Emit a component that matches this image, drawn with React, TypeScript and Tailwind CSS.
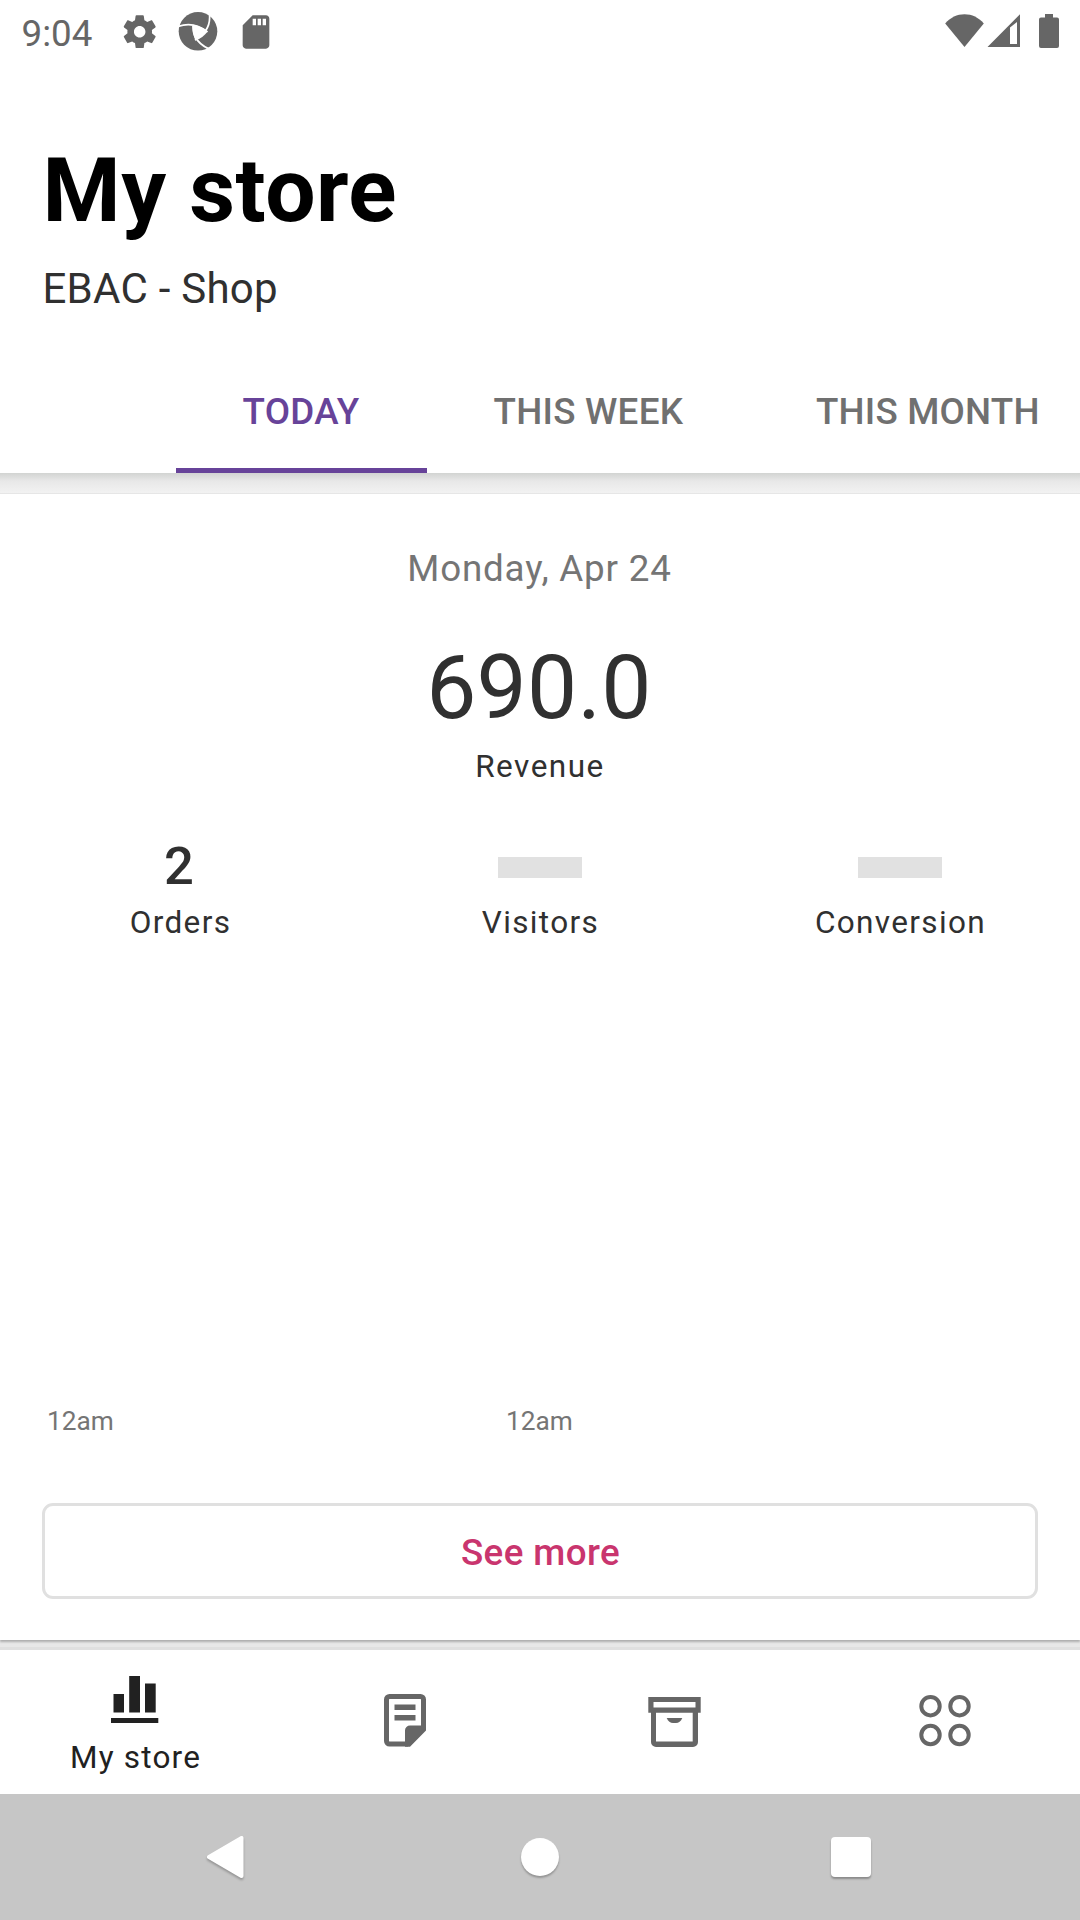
import React from "react";
import { MdSdCard } from "react-icons/md";

function StatusBar() {
  return (
    <div className="flex h-16 shrink-0 items-start text-[#666666]">
      <span className="ml-[21.5px] mt-[12px] w-[71px] text-[36.75px] leading-[43px]">9:04</span>
      <svg className="ml-[27.500px] mt-[12px] size-[39.4px] shrink-0" viewBox="0 0 24 24">
        <path
          fill="currentColor"
          d="M19.43 12.98c.04-.32.07-.64.07-.98s-.03-.66-.07-.98l2.11-1.65c.19-.15.24-.42.12-.64l-2-3.46c-.12-.22-.39-.3-.61-.22l-2.49 1c-.52-.4-1.08-.73-1.69-.98l-.38-2.65C14.46 2.18 14.25 2 14 2h-4c-.25 0-.46.18-.49.42l-.38 2.65c-.61.25-1.17.59-1.69.98l-2.49-1c-.23-.09-.49 0-.61.22l-2 3.46c-.13.22-.07.49.12.64l2.11 1.65c-.04.32-.07.65-.07.98s.03.66.07.98l-2.11 1.65c-.19.15-.24.42-.12.64l2 3.46c.12.22.39.3.61.22l2.49-1c.52.4 1.08.73 1.69.98l.38 2.65c.03.24.24.42.49.42h4c.25 0 .46-.18.49-.42l.38-2.65c.61-.25 1.17-.59 1.69-.98l2.49 1c.23.09.49 0 .61-.22l2-3.46c.12-.22.07-.49-.12-.64l-2.11-1.65zM12 15.5c-1.93 0-3.5-1.57-3.5-3.5s1.57-3.5 3.5-3.5 3.5 1.57 3.5 3.5-1.57 3.5-3.5 3.5z"
        />
      </svg>
      <svg className="ml-[18.6px] mt-[11px] h-10 w-10 shrink-0" viewBox="0 0 40 40">
        <circle cx="20" cy="20.3" r="19.3" fill="currentColor" />
        <path d="M15 14Q23 14.500 29.500 20.500Q25.500 26.500 17.500 29.500Q14 22 15 14Z" fill="#fff" />
        <path
          d="M0 15.5Q16 10 29.500 21M31.500 4Q33 19.500 17 29M15 14Q14 32 35 39.500"
          fill="none"
          stroke="#fff"
          strokeWidth="1.700"
        />
      </svg>
      <MdSdCard className="ml-[18px] mt-[11.500px] size-[40px] shrink-0" />
      <div className="flex-1" />
      <svg className="mr-[3px] mt-[13px] h-[35px] w-10" viewBox="0 0 40 35">
        <path d="M20.500 34L1.200 10.500C6.500 4.500 13 1.300 20.500 1.300S34.500 4.500 39.800 10.500Z" fill="currentColor" />
      </svg>
      <svg className="mr-[19px] mt-[13px] h-[35px] w-[33px]" viewBox="0 0 33 35">
        <path fillRule="evenodd" d="M.5 34L33 1.300V34ZM23 14.500V31H30V9Z" fill="currentColor" />
      </svg>
      <svg className="mr-[21px] mt-[14px] h-[34px] w-[20px]" viewBox="0 0 20 34">
        <path d="M6 0H14V3.500H18A2 2 0 0 1 20 5.500V32A2 2 0 0 1 18 34H2A2 2 0 0 1 0 32V5.500A2 2 0 0 1 2 3.500H6Z" fill="currentColor" />
      </svg>
    </div>
  );
}

function Tabs() {
  return (
    <div className="mt-[33px] flex h-[126px] pl-[176px] text-[36.75px] font-medium whitespace-nowrap text-[#707070]">
      <div className="flex h-full w-[251px] shrink-0 items-center border-b-[5px] border-[#674399] pt-[8px] pl-[66.500px] leading-[43px] tracking-[0.3px] text-[#674399]">
        TODAY
      </div>
      <div className="flex h-full w-[323px] shrink-0 items-center pt-[3px] pl-[66.500px] leading-[43px] tracking-[0.25px]">
        THIS WEEK
      </div>
      <div className="flex h-full shrink-0 items-center pt-[3px] pl-[66px] leading-[43px] tracking-[0.2px]">THIS MONTH</div>
    </div>
  );
}

function Stat({ label, value }: { label: string; value?: string }) {
  return (
    <div className="flex w-[360px] flex-col items-center">
      <div className="flex h-[62px] items-center text-[52.5px] leading-[62px] font-medium">
        {value ? <span className="pr-[2px]">{value}</span> : <div className="mt-[3px] h-[21px] w-[84px] bg-[#e1e1e1]" />}
      </div>
      <div className="mt-[7px] pl-px text-[31.5px] leading-[37px] tracking-[1.35px]">{label}</div>
    </div>
  );
}

function StatsCard() {
  return (
    <section className="relative flex h-[1146px] shrink-0 flex-col bg-white text-[#303030] shadow-[0_2px_2px_rgba(0,0,0,0.25)]">
      <div className="mt-[53px] pr-px text-center text-[36.75px] leading-[43px] tracking-[0.8px] text-[#757575]">
        Monday, Apr 24
      </div>
      <div className="mt-[45px] pr-[2px] text-center text-[89.25px] leading-[105px] tracking-[0.3px]">690.0</div>
      <div className="mt-[8px] text-center text-[31.5px] leading-[37px] tracking-[1.5px]">Revenue</div>
      <div className="mt-[50px] flex">
        <Stat label="Orders" value="2" />
        <Stat label="Visitors" />
        <Stat label="Conversion" />
      </div>
      <div className="mt-auto flex text-[26.25px] leading-[31px] text-[#757575]">
        <span className="ml-[47px] w-[459px]">12am</span>
        <span>12am</span>
      </div>
      <button className="mx-[42px] mt-[66px] mb-[41px] flex h-[96px] shrink-0 items-center justify-center rounded-[11px] border-[3px] border-[#e0e0e0] text-[36.75px] leading-[43px] font-medium tracking-[0.4px] text-[#c9356e]">
        <span className="pt-[3px] pl-px">See more</span>
      </button>
    </section>
  );
}

function BottomNav() {
  return (
    <nav className="grid h-[144px] shrink-0 grid-cols-4 bg-white text-[#666666]">
      <div className="flex flex-col items-center text-[#212121]">
        <svg className="mt-[26px] h-[47px] w-[48px]" viewBox="0 0 48 47" fill="currentColor">
          <path d="M2.500 18H13V36.500H2.500ZM18.200 0H29V36.500H18.200ZM34 7.500H44.700V36.500H34ZM0 42H47.300V47H0Z" />
        </svg>
        <span className="mt-[16px] pl-px text-[31.5px] leading-[37px] tracking-[1.2px]">My store</span>
      </div>
      <div className="flex justify-center">
        <svg className="mt-[44px] h-[53px] w-[42px]" viewBox="0 0 42 53">
          <path d="M39.500 34V5.500a3 3 0 0 0-3-3H5.500a3 3 0 0 0-3 3V47a3 3 0 0 0 3 3H24" fill="none" stroke="currentColor" strokeWidth="5" />
          <path d="M10.500 10.500H31.500V16H10.500ZM10.500 21H31.500V26.500H10.500ZM42 31.500V36.500L26 52.700H21V36.500A5 5 0 0 1 26 31.500Z" fill="currentColor" />
        </svg>
      </div>
      <div className="flex justify-center pr-px">
        <svg className="mt-[47px] h-[50px] w-[53px]" viewBox="0 0 53 50">
          <path
            fillRule="evenodd"
            d="M.3 0H52.700V15.700H50V45A5 5 0 0 1 45 50H8A5 5 0 0 1 3 45V15.700H.3ZM5.500 5V10.500H47.500V5ZM8 15.700V44.500H44.700V15.700Z"
            fill="currentColor"
          />
          <path d="M18.700 21H34.300C33 24.500 30.500 26 28 26H25C22.500 26 20 24.500 18.700 21Z" fill="currentColor" />
        </svg>
      </div>
      <div className="flex justify-center pr-px">
        <svg className="mt-[45px] h-[52px] w-[52px]" viewBox="0 0 52 52" fill="none" stroke="currentColor" strokeWidth="4">
          <circle cx="11.500" cy="11.200" r="9.200" />
          <circle cx="40.500" cy="11.200" r="9.200" />
          <circle cx="11.500" cy="40" r="9.200" />
          <circle cx="40.500" cy="40" r="9.200" />
        </svg>
      </div>
    </nav>
  );
}

function SystemNav() {
  return (
    <div className="flex h-[126px] shrink-0 items-center bg-[#c6c6c6] text-white">
      <svg className="ml-[206px] h-[44px] w-[39px] drop-shadow-[0_2px_1px_rgba(0,0,0,0.25)]" viewBox="0 0 39 44">
        <path d="M3 22L35.500 3V41Z" fill="currentColor" stroke="currentColor" strokeWidth="4" strokeLinejoin="round" />
      </svg>
      <div className="ml-[276px] size-[38px] rounded-full bg-white shadow-[0_2px_2px_rgba(0,0,0,0.25)]" />
      <div className="ml-[272px] size-[40px] rounded-[4px] bg-white shadow-[0_2px_2px_rgba(0,0,0,0.3)]" />
    </div>
  );
}

export default function App() {
  return (
    <div className="flex h-[1920px] w-[1080px] flex-col overflow-hidden bg-white font-[Roboto,sans-serif] antialiased">
      <StatusBar />
      <header className="h-[409px] shrink-0 overflow-hidden">
        <h1 className="mt-[74px] pl-[42.500px] text-[89.25px] leading-[105px] font-bold tracking-[0.5px] text-black">
          My store
        </h1>
        <p className="mt-[21px] pl-[42.500px] text-[42px] leading-[50px] tracking-[0.25px] text-[#303030]">EBAC - Shop</p>
        <Tabs />
      </header>
      <div className="h-[21px] shrink-0 border-b border-[#e6e6e6] bg-linear-to-b from-[#d2d4d2] via-[#e8e8e8] via-40% to-[#f2f2f2]" />
      <StatsCard />
      <div className="h-[10px] shrink-0 border-b-[3px] border-[#e0e0e0] bg-[#e8e8e8]" />
      <BottomNav />
      <SystemNav />
    </div>
  );
}
